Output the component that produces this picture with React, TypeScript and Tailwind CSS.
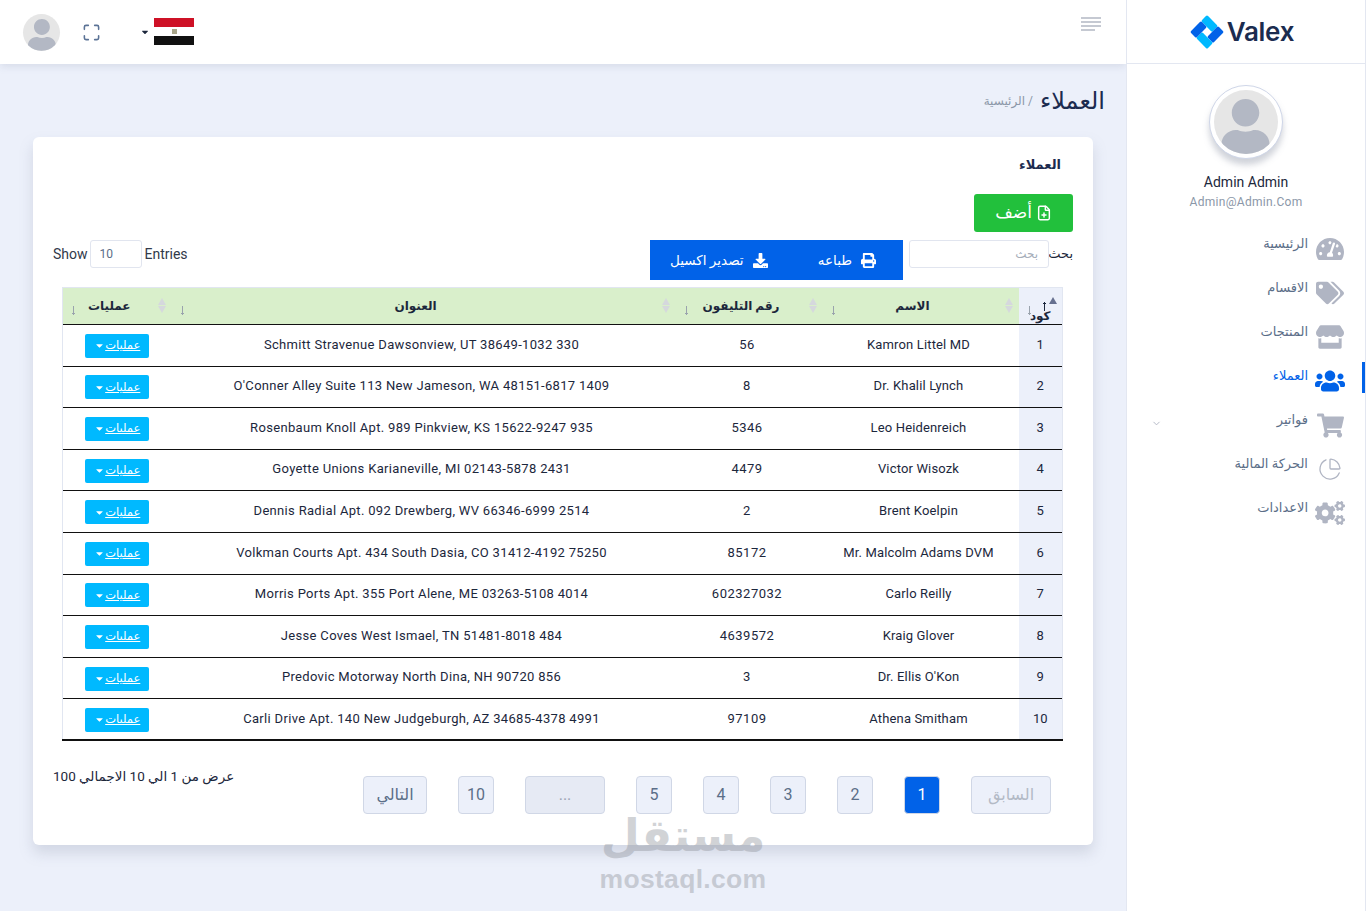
import React from 'react';
import { FaTachometerAlt, FaTags, FaStore, FaUsers, FaShoppingCart, FaCogs, FaPrint, FaDownload, FaCaretDown, FaUser } from 'react-icons/fa';
import { ChartPie, ChevronDown, Maximize, FilePlus } from 'lucide-react';

const rows = [
  ['1', 'Kamron Littel MD', '56', 'Schmitt Stravenue Dawsonview, UT 38649-1032 330'],
  ['2', 'Dr. Khalil Lynch', '8', "O'Conner Alley Suite 113 New Jameson, WA 48151-6817 1409"],
  ['3', 'Leo Heidenreich', '5346', 'Rosenbaum Knoll Apt. 989 Pinkview, KS 15622-9247 935'],
  ['4', 'Victor Wisozk', '4479', 'Goyette Unions Karianeville, MI 02143-5878 2431'],
  ['5', 'Brent Koelpin', '2', 'Dennis Radial Apt. 092 Drewberg, WV 66346-6999 2514'],
  ['6', 'Mr. Malcolm Adams DVM', '85172', 'Volkman Courts Apt. 434 South Dasia, CO 31412-4192 75250'],
  ['7', 'Carlo Reilly', '602327032', 'Morris Ports Apt. 355 Port Alene, ME 03263-5108 4014'],
  ['8', 'Kraig Glover', '4639572', 'Jesse Coves West Ismael, TN 51481-8018 484'],
  ['9', "Dr. Ellis O'Kon", '3', 'Predovic Motorway North Dina, NH 90720 856'],
  ['10', 'Athena Smitham', '97109', 'Carli Drive Apt. 140 New Judgeburgh, AZ 34685-4378 4991'],
];

const menu = [
  { label: 'الرئيسية', icon: <FaTachometerAlt size={28} /> },
  { label: 'الاقسام', icon: <FaTags size={28} /> },
  { label: 'المنتجات', icon: <FaStore size={28} /> },
  { label: 'العملاء', icon: <FaUsers size={30} />, active: true },
  { label: 'فواتير', icon: <FaShoppingCart size={27} />, caret: true },
  { label: 'الحركة المالية', icon: <ChartPie size={24} strokeWidth={1.3} /> },
  { label: 'الاعدادات', icon: <FaCogs size={30} /> },
];

const Arrow = ({ up, color, className }: { up?: boolean; color: string; className: string }) => (
  <svg width="5" height="10" viewBox="0 0 5 10" className={`absolute ${className}`} stroke={color} fill="none">
    {up ? <path d="M2.5 10V1M1 2.5h3" /> : <path d="M2.5 0v9M1 7.5h3" />}
  </svg>
);

const SortMarks = ({ current }: { current?: boolean }) => (
  <>
    {current ? (
      <>
        <span className="absolute right-[5px] top-[9px] h-0 w-0 border-x-[4px] border-b-[7px] border-x-transparent border-b-[#66708f]" />
        <Arrow up color="#1c273c" className="right-[15px] top-[13px]" />
      </>
    ) : (
      <span className="absolute right-[6px] top-[10px] flex flex-col gap-px">
        <span className="h-0 w-0 border-x-[4px] border-b-[7px] border-x-transparent border-b-[#d5d8dd]" />
        <span className="h-0 w-0 border-x-[4px] border-t-[7px] border-x-transparent border-t-[#d5d8dd]" />
      </span>
    )}
    <Arrow color="#9aa3ad" className="left-[8px] top-[18px]" />
  </>
);

const Avatar = ({ size }: { size: string }) => (
  <div className={`${size} flex items-end justify-center overflow-hidden rounded-full bg-[#e6e6e6] text-[#b3b8c4]`}>
    <FaUser className="h-[86%] w-[86%]" />
  </div>
);

const PageButton = ({ label, className }: { label: string; className: string }) => (
  <button className={`flex h-[38px] items-center justify-center rounded border border-[#d0d7e6] bg-[#ecf0fa] text-[16px] text-[#5b6e88] ${className}`}>
    {label}
  </button>
);

export default function App() {
  return (
    <div dir="rtl" className="relative flex h-[911px] overflow-hidden bg-[#ecf0fa] font-['Roboto','DejaVu_Sans',sans-serif] text-[#1c273c]">
      <aside className="relative h-full w-[240px] shrink-0 border-x border-[#e3e7f1] bg-white">
        <div className="flex h-[64px] items-center justify-center gap-[3px] border-b border-[#e3e7f1] pr-[8px]" dir="ltr">
          <svg width="34" height="34" viewBox="-17 -17 34 34">
            <g transform="rotate(45)">
              <rect x="-12" y="-12" width="15.5" height="8.5" rx="1.5" fill="#00b9ff" />
              <rect x="3.5" y="-12" width="8.5" height="15.5" rx="1.5" fill="#0162e8" />
              <rect x="-3.5" y="3.5" width="15.5" height="8.5" rx="1.5" fill="#00b9ff" />
              <rect x="-12" y="-3.5" width="8.5" height="15.5" rx="1.5" fill="#0162e8" />
            </g>
          </svg>
          <span className="font-['Inter',sans-serif] text-[26px] font-semibold leading-none tracking-[-0.3px] text-[#1b2c4f]">Valex</span>
        </div>

        <div className="mt-[21px] flex flex-col items-center">
          <div className="rounded-full border-[1.5px] border-[#cfd6e8] bg-white p-[4px] shadow-[0_6px_6px_rgba(120,130,150,0.35)]">
            <Avatar size="h-[64px] w-[64px]" />
          </div>
          <div className="mt-[13px] text-[14px] leading-[20px] text-[#1c273c]">Admin Admin</div>
          <div className="mt-[1px] text-[12px] leading-[18px] tracking-[0.3px] text-[#8b97a8]">Admin@Admin.Com</div>
        </div>

        <nav className="mt-[16px] flex flex-col">
          {menu.map(item => (
            <div key={item.label} className="relative flex h-[44px] items-center gap-[7px] pr-[20px]">
              <div className={`flex w-[30px] justify-center ${item.active ? 'text-[#0162e8]' : 'text-[#b0b5c3]'}`}>{item.icon}</div>
              <span className={`-mt-[10px] text-[13px] ${item.active ? 'text-[#0162e8]' : 'text-[#5b6e88]'}`}>{item.label}</span>
              {item.caret && <ChevronDown size={11} className="absolute left-[24px] top-[15px] text-[#b0b5c3]" />}
              {item.active && <span className="absolute right-0 top-[3px] h-[31px] w-[3px] bg-[#0162e8]" />}
            </div>
          ))}
        </nav>
      </aside>

      <div className="min-w-0 flex-1">
        <header className="flex h-[64px] items-center justify-between bg-white pl-[23px] pr-[25px] shadow-[0_2px_8px_rgba(120,130,160,0.2)]">
          <div className="-mt-[17px] flex w-[20px] flex-col items-end gap-[2px]">
            <span className="h-[2px] w-[20px] bg-[#c5c9d2]" />
            <span className="h-[2px] w-[20px] bg-[#c5c9d2]" />
            <span className="h-[2px] w-[20px] bg-[#c5c9d2]" />
            <span className="h-[2px] w-[14px] bg-[#c5c9d2]" />
          </div>
          <div className="flex items-center">
            <div className="-mt-[1px] flex h-[27px] w-[40px] flex-col">
              <div className="h-[9px] bg-[#ce1126]" />
              <div className="flex h-[9px] items-center justify-center bg-white">
                <span className="h-[5px] w-[5px] bg-[#a8a58a]" />
              </div>
              <div className="h-[9px] bg-[#111]" />
            </div>
            <FaCaretDown size={10} className="mr-[4px] text-[#1c273c]" />
            <Maximize size={19} strokeWidth={2} className="mr-[39px] text-[#5b7396]" />
            <div className="mr-[22px]">
              <Avatar size="h-[37px] w-[37px]" />
            </div>
          </div>
        </header>

        <div className="px-[33px] pt-[23px]">
          <div className="flex h-[26px] items-center gap-[7px]">
            <h1 className="-mr-[12px] mt-[1px] text-[24px] leading-[26px] text-[#1c2b4f]">العملاء</h1>
            <span className="mt-[2px] text-[12px] text-[#8b97a8]">/ الرئيسية</span>
          </div>

          <main className="mt-[24px] h-[708px] rounded-md bg-white px-[20px] pt-[19px] shadow-[0_8px_14px_rgba(130,140,165,0.25)]">
            <h2 className="pr-[12px] text-[13px] font-bold leading-[18px] text-[#1c2b4f]">العملاء</h2>

            <button className="mt-[20px] flex h-[38px] w-[99px] items-center justify-center gap-[4px] rounded-[3px] bg-[#22c03c] text-[17px] font-medium text-white">
              <FilePlus size={16} strokeWidth={2.2} />
              أضف
            </button>

            <div className="mt-[8px] flex items-start justify-between">
              <div className="flex items-start">
                <label className="w-[24px] pt-[4px] text-[13px] leading-[20px]">بحث</label>
                <input
                  readOnly
                  placeholder="بحث"
                  className="h-[28px] w-[140px] rounded-[3px] border border-[#e1e5ef] bg-white px-[10px] text-[12px] placeholder:text-[#a5adb9]"
                />
                <div className="mr-[6px] flex h-[40px] w-[253px] items-center justify-between bg-[#0162e8] pl-[20px] pr-[27px] text-[13.5px] text-white">
                  <span className="flex items-center gap-[9px]"><FaPrint size={15} />طباعه</span>
                  <span className="flex items-center gap-[9px]"><FaDownload size={15} />تصدير اكسيل</span>
                </div>
              </div>
              <div dir="ltr" className="flex items-center gap-[2px] text-[14px] leading-[28px] text-[#31394a]">
                Show
                <input readOnly value="10" className="h-[28px] w-[52px] rounded-[3px] border border-[#e1e5ef] px-[9px] text-[12px] text-[#5b6e88]" />
                <span className="ml-px">Entries</span>
              </div>
            </div>

            <table className="mr-[10px] mt-[7px] w-[1001px] table-fixed border-collapse text-center text-[13px]">
              <thead>
                <tr className="h-[37px] text-[12px] font-bold text-[#1c273c]">
                  <th className="relative w-[44px] border-r border-t border-[#e1e6f1] bg-[#ecf0fa] pt-[19px] font-bold leading-[14px]">
                    كود<SortMarks current />
                  </th>
                  <th className="relative w-[196px] border-t border-[#e1e6f1] bg-[#d9efcb] pr-[16px]">الاسم<SortMarks /></th>
                  <th className="relative w-[147px] border-t border-[#e1e6f1] bg-[#d9efcb] pr-[16px]">رقم التليفون<SortMarks /></th>
                  <th className="relative w-[504px] border-t border-[#e1e6f1] bg-[#d9efcb] pr-[16px]">العنوان<SortMarks /></th>
                  <th className="relative border-l border-t border-[#e1e6f1] bg-[#d9efcb] pr-[16px]">عمليات<SortMarks /></th>
                </tr>
              </thead>
              <tbody className="border-t border-[#111]">
                {rows.map((r, i) => (
                  <tr key={r[0]} className={`h-[41.6px] ${i === rows.length - 1 ? 'border-b-2' : 'border-b'} border-[#111]`}>
                    <td className="border-r border-[#e1e6f1] bg-[#ecf0fa] pb-[2px]">{r[0]}</td>
                    <td dir="ltr" className="pb-[2px] pr-[4px] tracking-[0.15px]">{r[1]}</td>
                    <td className="pb-[2px] pr-[4px] tracking-[0.5px]">{r[2]}</td>
                    <td dir="ltr" className="pb-[2px] pr-[4px] tracking-[0.32px]">{r[3]}</td>
                    <td className="border-l border-[#e1e6f1] pt-[1px]">
                      <button className="mx-auto flex h-[24px] w-[64px] items-center justify-center rounded-[2px] bg-[#00b9ff] text-[11.5px] text-white underline">
                        عمليات<FaCaretDown size={11} />
                      </button>
                    </td>
                  </tr>
                ))}
              </tbody>
            </table>

            <div className="mt-[27px] flex items-start justify-between">
              <div className="flex items-center gap-[31px] pr-[22px] pt-[8px]">
                <PageButton label="السابق" className="w-[80px] bg-[#e4e8f2] text-[#b3bac6]" />
                <PageButton label="1" className="w-[36px] border-[#0162e8] !bg-[#0162e8] !text-white" />
                <PageButton label="2" className="w-[36px]" />
                <PageButton label="3" className="w-[36px]" />
                <PageButton label="4" className="w-[36px]" />
                <PageButton label="5" className="w-[36px]" />
                <PageButton label="..." className="w-[80px] !bg-[#e6eaf4] text-[#9aa3b2]" />
                <PageButton label="10" className="w-[36px]" />
                <PageButton label="التالي" className="w-[64px]" />
              </div>
              <div className="mt-[-1px] text-[13.5px] leading-[18px] text-[#1c273c]">عرض من 1 الي 10 الاجمالي 100</div>
            </div>
          </main>
        </div>
      </div>

      <div className="pointer-events-none absolute left-[600px] top-[810px] flex w-[166px] flex-col items-center font-bold text-[#8f939b] opacity-40">
        <span className="text-[45px] leading-[52px]">مستقل</span>
        <span dir="ltr" className="mt-[6px] font-['Liberation_Sans',sans-serif] text-[26.5px] leading-[22px] tracking-[0.3px]">mostaql.com</span>
      </div>
    </div>
  );
}
